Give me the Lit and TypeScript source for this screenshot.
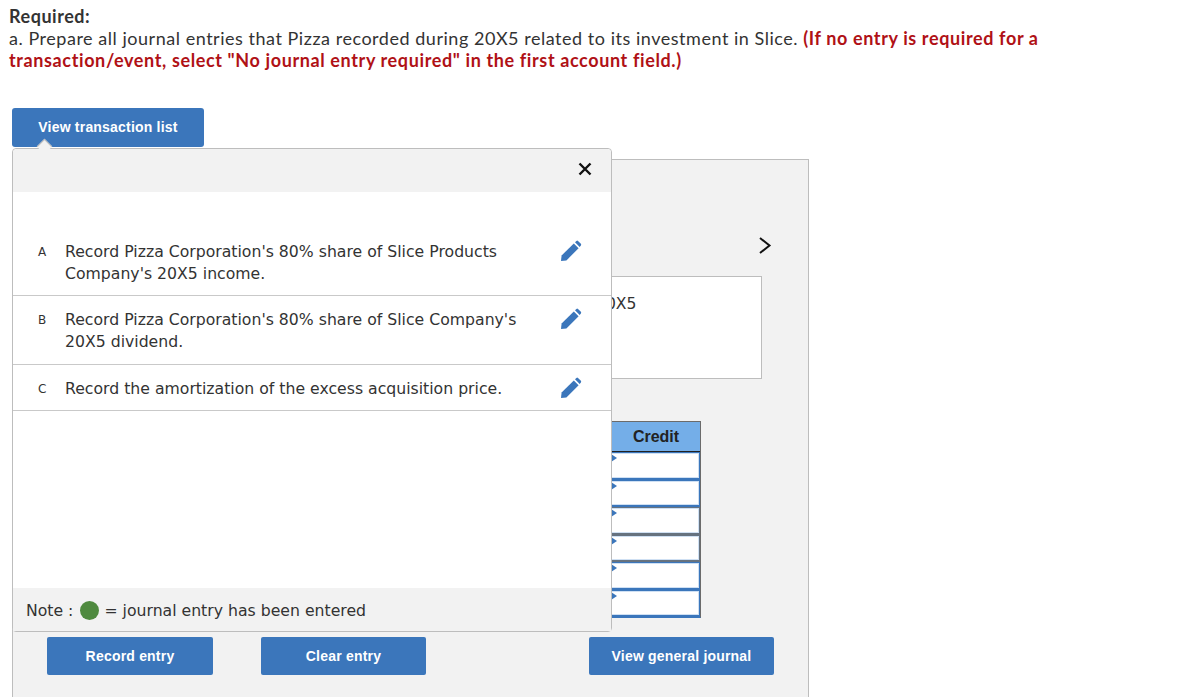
import { LitElement, css, html } from "lit";
import { customElement } from "lit/decorators.js";

const rows = [
  { key: "A", text: "Record Pizza Corporation's 80% share of Slice Products Company's 20X5 income." },
  { key: "B", text: "Record Pizza Corporation's 80% share of Slice Company's 20X5 dividend." },
  { key: "C", text: "Record the amortization of the excess acquisition price." },
];

const creditCells = ["", "", "grey", "grey", "", ""];

const pencil = html`<svg class="pencil" width="22" height="22" viewBox="0 0 22 22">
  <path fill="#3b76bb" d="M1 21 L1.6 15.6 L13.8 3.4 L18.6 8.2 L6.4 20.4 Z" />
  <path fill="#3b76bb" d="M15 2.2 L16.4 0.9 Q17.2 0.3 18 0.9 L20.9 3.8 Q21.5 4.6 20.9 5.4 L19.7 7 Z" />
</svg>`;

@customElement("app-root")
export class AppRoot extends LitElement {
  static styles = css`
    :host {
      display: block;
      position: relative;
      width: 1200px;
      height: 697px;
      overflow: hidden;
      background: #fff;
      color: #333;
      font-family: Lato, "Liberation Sans", sans-serif;
    }

    .intro {
      padding: 5px 0 0 9px;
      font-size: 18px;
      line-height: 22px;
      letter-spacing: 0.53px;
    }

    .intro b {
      font-weight: 700;
    }

    .warn {
      color: #b01116;
      font-weight: 700;
      letter-spacing: 0.62px;
    }

    .btn {
      display: flex;
      align-items: center;
      justify-content: center;
      box-sizing: border-box;
      border-radius: 2px;
      background: #3b76bb;
      color: #fff;
      font-family: "Liberation Sans", sans-serif;
      font-size: 14px;
      font-weight: 700;
      letter-spacing: 0.2px;
    }

    .list-btn {
      width: 192px;
      height: 39px;
      margin: 37px 0 12px 12px;
      padding-bottom: 2px;
      border-radius: 3px;
    }

    .panel {
      box-sizing: border-box;
      width: 797px;
      height: 560px;
      margin-left: 12px;
      border: 1px solid #bdbdbd;
      background: #f2f2f2;
      display: flex;
      flex-direction: column;
      align-items: flex-end;
    }

    .chevron {
      margin: 75px 36px 0 0;
      height: 20px;
    }

    .date-box {
      box-sizing: border-box;
      width: 500px;
      height: 103px;
      margin: 21px 46px 0 0;
      border: 1px solid #bdbdbd;
      background: #fff;
      padding: 16px 0 0 333px;
      font-family: "DejaVu Sans", sans-serif;
      font-size: 15.6px;
      line-height: 22px;
    }

    .credit {
      width: 100px;
      margin: 42px 107px 0 0;
      border: 1px solid #6b6b6b;
      border-bottom-color: #3b76bb;
    }

    .credit-head {
      height: 29px;
      border-bottom: 1px solid #222;
      background: #74aee8;
      color: #222;
      font-family: "Liberation Sans", sans-serif;
      font-size: 16px;
      font-weight: 700;
      line-height: 30px;
      text-align: center;
      padding-left: 12px;
    }

    .cell {
      position: relative;
      box-sizing: border-box;
      height: 27.5px;
      background: #fff;
      border-top: 1px solid #3b76bb;
      border-bottom: 2px solid #3b76bb;
      border-right: 1px solid #3b76bb;
      box-shadow: inset 0 0 0 1px #cfe0f3;
    }

    .cell.grey {
      border-color: #66727f;
    }

    /* the popover covers the first 11px of the column */
    .cell::before {
      content: "";
      position: absolute;
      left: 11px;
      top: 1px;
      border-left: 6px solid #3b76bb;
      border-top: 4px solid transparent;
      border-bottom: 4px solid transparent;
    }

    .actions {
      position: relative;
      align-self: stretch;
      margin-top: 19px;
      height: 38px;
    }

    .actions .btn {
      position: absolute;
      top: 0;
      height: 38px;
    }

    .popover {
      position: absolute;
      left: 12px;
      top: 148px;
      box-sizing: border-box;
      width: 600px;
      height: 484px;
      display: flex;
      flex-direction: column;
      border: 1px solid #bdbdbd;
      border-radius: 4px;
      background: #fff;
      font-family: "DejaVu Sans", sans-serif;
      font-size: 15.7px;
      line-height: 22px;
    }

    .pop-head {
      display: flex;
      justify-content: flex-end;
      align-items: center;
      box-sizing: border-box;
      height: 43px;
      padding: 0 19px 4px 0;
      background: #f2f2f2;
      border-radius: 4px 4px 0 0;
    }

    .rows {
      flex: 1;
      padding-top: 36px;
    }

    .row {
      display: flex;
      box-sizing: border-box;
      padding: 13px 0 11px;
      border-bottom: 1px solid #c9c9c9;
    }

    .row:first-child,
    .row:last-child {
      padding-bottom: 10px;
    }

    .key {
      width: 52px;
      padding-left: 25px;
      box-sizing: border-box;
      font-size: 12px;
    }

    .text {
      width: 468px;
    }

    .edit {
      margin: -1px 0 0 27px;
      height: 22px;
    }

    .note {
      display: flex;
      align-items: center;
      gap: 7px;
      height: 43px;
      padding: 2px 0 0 13px;
      box-sizing: border-box;
      background: #f2f2f2;
    }

    .note-text {
      margin-left: -2px;
    }

    .dot {
      width: 19px;
      height: 19px;
      border-radius: 50%;
      background: #4f8a3f;
    }

    .arrow {
      position: absolute;
      left: 39px;
      top: 141px;
      width: 10px;
      height: 10px;
      background: #f2f2f2;
      border-left: 1px solid #bdbdbd;
      border-top: 1px solid #bdbdbd;
      transform: rotate(45deg);
    }
  `;

  render() {
    return html`
      <div class="intro">
        <div><b>Required:</b></div>
        <div>
          a. Prepare all journal entries that Pizza recorded during 20X5 related to its investment in Slice.
          <span class="warn">(If no entry is required for a</span>
        </div>
        <div class="warn">transaction/event, select "No journal entry required" in the first account field.)</div>
      </div>
      <div class="btn list-btn">View transaction list</div>
      <div class="panel">
        <svg class="chevron" width="14" height="20" viewBox="0 0 14 20">
          <path d="M2 3 L11.5 10.5 L2 18" fill="none" stroke="#111" stroke-width="2" />
        </svg>
        <div class="date-box">20X5</div>
        <div class="credit">
          <div class="credit-head">Credit</div>
          ${creditCells.map((c) => html`<div class="cell ${c}"></div>`)}
        </div>
        <div class="actions">
          <div class="btn" style="left:34px;width:166px">Record entry</div>
          <div class="btn" style="left:248px;width:165px">Clear entry</div>
          <div class="btn" style="left:576px;width:185px">View general journal</div>
        </div>
      </div>
      <div class="popover">
        <div class="pop-head">
          <svg width="14" height="14" viewBox="0 0 14 14">
            <path d="M1.5 1.5 L12.5 12.5 M12.5 1.5 L1.5 12.5" stroke="#111" stroke-width="2.4" />
          </svg>
        </div>
        <div class="rows">
          ${rows.map(
            (r) => html`<div class="row">
              <div class="key">${r.key}</div>
              <div class="text">${r.text}</div>
              <div class="edit">${pencil}</div>
            </div>`
          )}
        </div>
        <div class="note">
          <span>Note :</span><span class="dot"></span><span class="note-text">= journal entry has been entered</span>
        </div>
      </div>
      <div class="arrow"></div>
    `;
  }
}
